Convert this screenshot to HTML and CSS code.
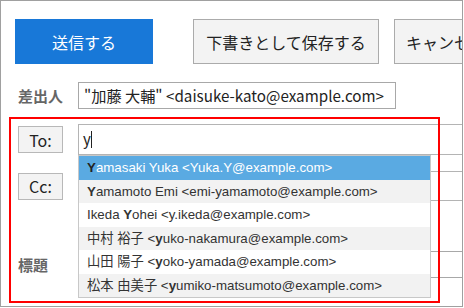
FILE: index.html
```html
<!DOCTYPE html>
<html lang="ja">
<head>
    <meta charset="UTF-8">
    <title>メール作成</title>
    <link rel="stylesheet" href="styles.css">
</head>
<body>
    <div class="frame">
        <div class="toolbar">
            <button class="btn btn-send">送信する</button>
            <button class="btn btn-draft">下書きとして保存する</button>
            <button class="btn btn-cancel">キャンセル</button>
        </div>
        <div class="form">
            <div class="row row-from">
                <span class="label">差出人</span>
                <div class="field field-from">"加藤 大輔" &lt;daisuke-kato@example.com&gt;</div>
            </div>
            <div class="row row-to">
                <button class="addr-btn">To:</button>
                <div class="field field-addr">y<span class="caret"></span></div>
            </div>
            <div class="row row-cc">
                <button class="addr-btn">Cc:</button>
                <div class="field field-addr"></div>
            </div>
            <div class="row row-subject">
                <span class="label">標題</span>
                <div class="field field-subject"></div>
            </div>
        </div>

        <div class="highlight"></div>

        <ul class="suggest">
            <li class="selected"><b>Y</b>amasaki Yuka &lt;Yuka.Y@example.com&gt;</li>
            <li><b>Y</b>amamoto Emi &lt;emi-yamamoto@example.com&gt;</li>
            <li>Ikeda <b>Y</b>ohei &lt;y.ikeda@example.com&gt;</li>
            <li>中村 裕子 &lt;<b>y</b>uko-nakamura@example.com&gt;</li>
            <li>山田 陽子 &lt;<b>y</b>oko-yamada@example.com&gt;</li>
            <li>松本 由美子 &lt;<b>y</b>umiko-matsumoto@example.com&gt;</li>
        </ul>
    </div>
</body>
</html>
```

FILE: styles.css
```css
* {
    box-sizing: border-box;
}
body {
    margin: 0;
    font-family: "Noto Sans CJK JP", "Liberation Sans", sans-serif;
    color: #222;
}
.frame {
    position: relative;
    width: 463px;
    height: 307px;
    border: 1px solid #a0a0a0;
    background-color: #fff;
    overflow: hidden;
}
.toolbar {
    display: flex;
    padding: 18px 0 0 14px;
}
.btn {
    flex-shrink: 0;
    height: 45px;
    font-family: inherit;
    font-size: 16px;
    border: 1px solid #ababab;
    background-color: #f3f3f3;
    color: #222;
    padding: 0;
}
.btn-send {
    width: 138px;
    background-color: #1878d8;
    border-color: #1878d8;
    color: #fff;
}
.btn-draft {
    width: 186px;
    margin-left: 40px;
}
.btn-cancel {
    width: 120px;
    margin-left: 15px;
    text-align: left;
    padding-left: 11px;
}
.form {
    padding-left: 17px;
}
.row {
    display: flex;
    align-items: center;
}
.row-from {
    margin-top: 18px;
    height: 27px;
}
.row-to {
    margin-top: 15px;
    height: 31px;
}
.row-cc {
    margin-top: 16px;
    height: 30px;
}
.row-subject {
    margin-top: 50px;
    height: 27px;
}
.label {
    width: 60px;
    flex-shrink: 0;
    font-size: 15px;
    font-weight: bold;
    color: #666;
}
.field {
    flex-shrink: 0;
    height: 100%;
    border: 1px solid #a8a8a8;
    background-color: #fff;
}
.field-from {
    width: 318px;
    padding-left: 5px;
    font-size: 15.2px;
    line-height: 25px;
    white-space: nowrap;
}
.field-addr {
    width: 400px;
    margin-left: 15px;
    padding-left: 4px;
    font-size: 15px;
    line-height: 28px;
    border-color: #b4b4b4;
}
.field-subject {
    width: 400px;
}
.caret {
    display: inline-block;
    width: 1px;
    height: 17px;
    background-color: #222;
    vertical-align: -3px;
}
.addr-btn {
    flex-shrink: 0;
    width: 45px;
    height: 27px;
    padding: 0;
    font-family: inherit;
    font-size: 16px;
    color: #222;
    background-color: #f3f3f3;
    border: 1px solid #b8b8b8;
}
.highlight {
    position: absolute;
    left: 8px;
    top: 116px;
    width: 431px;
    height: 186px;
    border: 2px solid #ff0000;
}
.suggest {
    position: absolute;
    left: 77px;
    top: 154px;
    width: 353px;
    margin: 0;
    padding: 0;
    list-style: none;
    border: 1px solid #c8c8c8;
    background-color: #fff;
    font-family: "Liberation Sans", "Noto Sans CJK JP", sans-serif;
    font-size: 13.3px;
    color: #333;
}
.suggest li {
    height: 23.5px;
    line-height: 23.5px;
    padding-left: 8px;
    white-space: nowrap;
}
.suggest li:nth-child(even) {
    background-color: #f2f2f2;
}
.suggest li.selected {
    background-color: #5aaae2;
    color: #fff;
}
.suggest li.selected b {
    color: #222;
}
```
